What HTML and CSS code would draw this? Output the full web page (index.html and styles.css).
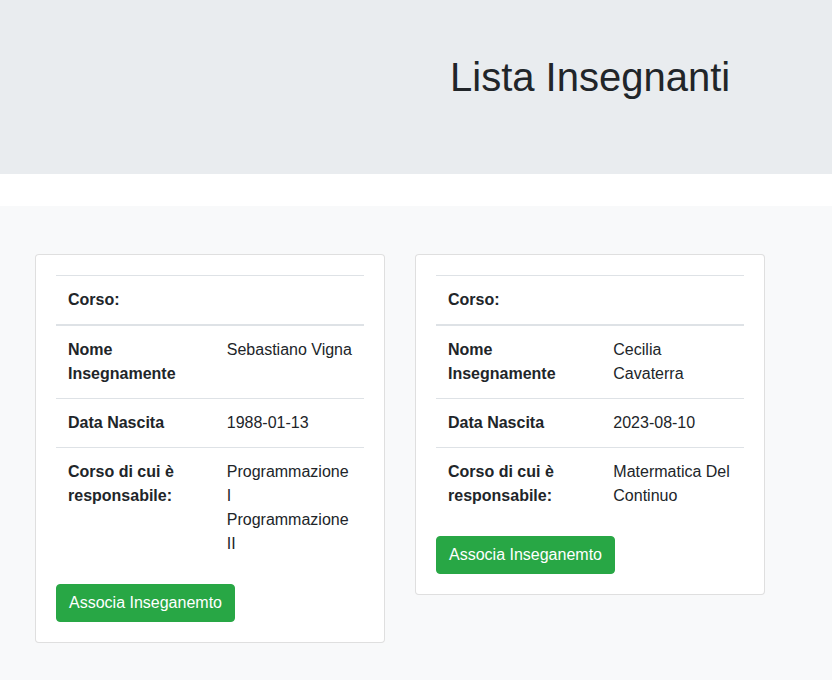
FILE: index.html
```html
<!DOCTYPE html>
<html lang="it">
<head>
<meta charset="utf-8">
<title>Lista Insegnanti</title>
<link rel="stylesheet" href="styles.css">
</head>
<body>
<header class="jumbo">
  <h1 class="title">Lista Insegnanti</h1>
</header>
<main class="area">
  <div class="cards">
    <div class="card">
      <table class="tbl">
        <thead><tr><th colspan="2">Corso:</th></tr></thead>
        <tbody>
          <tr><th>Nome Insegnamente</th><td>Sebastiano Vigna</td></tr>
          <tr><th>Data Nascita</th><td>1988-01-13</td></tr>
          <tr><th>Corso di cui è responsabile:</th><td>Programmazione I<br>Programmazione II</td></tr>
        </tbody>
      </table>
      <button class="btn">Associa Inseganemto</button>
    </div>
    <div class="card">
      <table class="tbl">
        <thead><tr><th colspan="2">Corso:</th></tr></thead>
        <tbody>
          <tr><th>Nome Insegnamente</th><td>Cecilia Cavaterra</td></tr>
          <tr><th>Data Nascita</th><td>2023-08-10</td></tr>
          <tr><th>Corso di cui è responsabile:</th><td>Matermatica Del Continuo</td></tr>
        </tbody>
      </table>
      <button class="btn">Associa Inseganemto</button>
    </div>
  </div>
</main>
</body>
</html>
```

FILE: styles.css
```css
* { box-sizing: border-box; }
html, body { margin: 0; padding: 0; }
body {
  font-family: "Liberation Sans", Arial, sans-serif;
  font-size: 16px;
  line-height: 1.5;
  color: #212529;
  background: #fff;
}
.jumbo {
  background: #e9ecef;
  height: 174px;
  margin-bottom: 32px;
  padding: 53px 0 0 450px;
}
.title {
  margin: 0;
  font-size: 40px;
  font-weight: 400;
  line-height: 48px;
}
.area {
  background: #f8f9fa;
  min-height: 474px;
  padding: 48px 0 0 35px;
}
.cards {
  display: flex;
  align-items: flex-start;
  gap: 30px;
}
.card {
  width: 350px;
  background: #fff;
  border: 1px solid rgba(0,0,0,.125);
  border-radius: 4px;
  padding: 20px;
}
.tbl {
  width: 100%;
  border-collapse: collapse;
  margin-bottom: 16px;
}
.tbl th, .tbl td {
  padding: 12px;
  border-top: 1px solid #dee2e6;
  text-align: left;
  vertical-align: top;
}
.tbl th { font-weight: 700; }
.tbl thead th { border-bottom: 2px solid #dee2e6; }
.btn {
  display: inline-block;
  font-family: inherit;
  font-size: 16px;
  line-height: 24px;
  padding: 6px 12px;
  color: #fff;
  background: #28a745;
  border: 1px solid #28a745;
  border-radius: 4px;
}
```
